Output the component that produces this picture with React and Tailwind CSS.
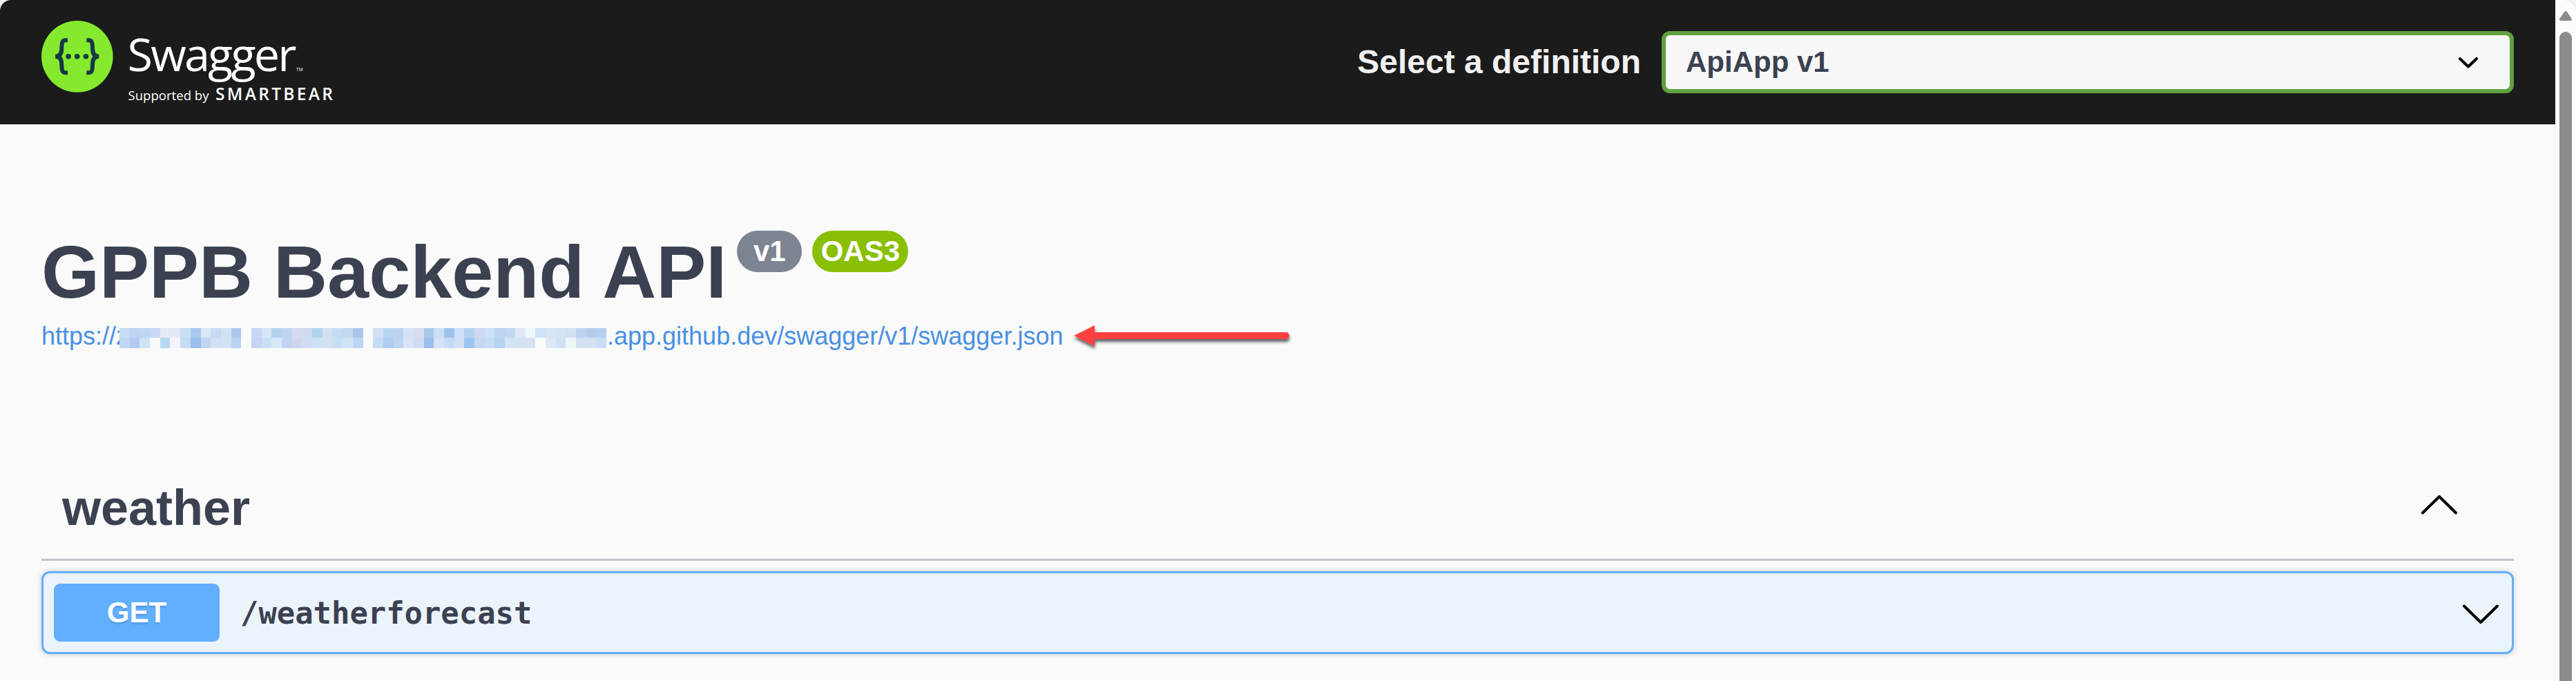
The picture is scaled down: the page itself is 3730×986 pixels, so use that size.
const HIDDEN_HOST = [
  ["#c6dcf3", "#c0d7f4"], ["#bfd3f2", "#b2caf0"], ["#bdd6f3", "#d0e2f4"], ["#c8d8f2", "#f8f9fb"],
  ["#e4ebf6", "#b7d7f3"], ["#e4e9f5", "#f2f4f9"], ["#cbdff5", "#c6dbf4"], ["#a8caee", "#99beeb"],
  ["#d9e7f7", "#bfd5f3"], ["#c8daf3", "#d5dff2"], ["#d2e2f5", "#d0e2f4"], ["#acc8ee", "#b9d5f2"],
  null,
  ["#c8d8f2", "#c6d4f1"], ["#d8e5f6", "#c8dff5"], ["#b2d4f0", "#d6eaf7"], ["#c0d5f3", "#c0d5f3"],
  ["#d5daf0", "#d1d4ed"], ["#d0daf0", "#d0dcf4"], ["#b0d5f1", "#cce3f7"], ["#d5dff2", "#d5dff2"],
  ["#c5ddf3", "#c6dff5"], ["#c3d8f1", "#d2e2f5"], ["#aac6ee", "#bbd7f3"],
  null,
  ["#d4def1", "#c5dcf4"], ["#b6d5f1", "#b0ccf1"], ["#bad4f0", "#bcd6f2"], ["#d6e2f4", "#d9e5f6"],
  ["#d8ddef", "#d0dcf3"], ["#aac9ee", "#98beed"], ["#cbdff5", "#d4e3f7"], ["#9fc2ed", "#c6dbf4"],
  ["#d0dff6", "#d2dff3"], ["#b5d2f0", "#9bc6f0"], ["#ced9f0", "#c7d6f1"], ["#cde1f7", "#c6dcf4"],
  ["#bed4f2", "#b6d4f1"], ["#c1d8f1", "#d2e3f5"], ["#e0e7f5", "#d3e3f5"], ["#eef7f9", "#d8e2f4"],
  ["#cfe5f6", "#fafafa"], ["#d8e4f4", "#dee7f6"], ["#d4e4f4", "#d0e2f5"], ["#d3e2f2", "#edf6f9"],
  ["#bed3f1", "#d2e1f3"], ["#b6cced", "#d2e2f4"], ["#b4d0f1", "#c8def6"],
];

function Logo() {
  return (
    <svg width="440" height="140" viewBox="50 20 440 140" className="-ml-2.5 block shrink-0">
      <circle cx="111.8" cy="81.8" r="51.8" fill="#85ea2d" />
      <g fill="none" stroke="#173647" strokeWidth="6">
        <path d="M98 58.2h-3.2c-4 0-5 2.600-5.200 6.300l-.5 8c-.3 5-2.500 9.200-9 9.200 6.500 0 8.700 4.200 9 9.200l.5 8c.2 3.700 1.200 6.300 5.200 6.300H98" />
        <path d="M125.300 58.200h3.200c4 0 5 2.600 5.200 6.300l.5 8c.3 5 2.500 9.200 9 9.200-6.500 0-8.700 4.200-9 9.200l-.5 8c-.2 3.700-1.200 6.300-5.200 6.300h-3.200" />
      </g>
      <g fill="#173647">
        <circle cx="99" cy="81.700" r="3.800" />
        <circle cx="111.700" cy="81.700" r="3.800" />
        <circle cx="124.400" cy="81.700" r="3.800" />
      </g>
      <g fill="#fff" fontFamily="'Open Sans', sans-serif">
        <text x="184.500" y="103" fontSize="66.500" textLength="245" lengthAdjust="spacing">Swagger</text>
        <text x="429" y="102.800" fontSize="6.500" textLength="9.500">TM</text>
        <text x="185.500" y="144.700" fontSize="18.500" textLength="117">Supported by</text>
        <text x="312" y="144.700" fontSize="24.500" fontWeight="600" textLength="170">SMARTBEAR</text>
      </g>
    </svg>
  );
}

function Chevron({ className, points, width, height, stroke }) {
  return (
    <svg width={width} height={height} className={className} fill="none" stroke="#000" strokeWidth={stroke} strokeLinecap="round" strokeLinejoin="round">
      <polyline points={points} />
    </svg>
  );
}

function Header() {
  return (
    <header className="flex h-[180px] items-start justify-between rounded-tl-[16px] bg-[#1b1b1b] px-[60px]">
      <div className="pt-5">
        <Logo />
      </div>
      <div className="flex h-full items-center">
        <span className="mr-[30px] text-[48px] leading-[54px] font-bold text-[#f0f0f0]">Select a definition</span>
        <div className="flex h-[90px] w-[1234px] items-center justify-between rounded-[12px] border-[6px] border-[#62a03f] bg-[#f7f7f7] pr-[46px] pl-[29px]">
          <span className="text-[42px] leading-[48px] font-bold text-[#3b4151]">ApiApp v1</span>
          <Chevron width="28" height="16" points="2,2 14,13.500 26,2" stroke="4" className="mt-[2px]" />
        </div>
      </div>
    </header>
  );
}

function RedactedHost() {
  return (
    <span className="absolute top-[15px] left-[113px] flex h-[29px] w-[705px] bg-[#fafafa]">
      {HIDDEN_HOST.map((pair, i) => (
        <span key={i} className="flex flex-1 flex-col">
          {pair && <span className="h-[14px]" style={{ backgroundColor: pair[0] }} />}
          {pair && <span className="h-[15px]" style={{ backgroundColor: pair[1] }} />}
        </span>
      ))}
    </span>
  );
}

function Info() {
  return (
    <section className="pt-[154px]">
      <div className="flex items-start">
        <h1 className="mt-[-2px] text-[108px] leading-[124px] font-bold whitespace-nowrap text-[#3b4151]">GPPB Backend API</h1>
        <span className="ml-[15px] flex h-[60px] w-[94px] items-center justify-center rounded-full bg-[#7d8492] text-[42px] leading-[48px] font-bold text-white">v1</span>
        <span className="ml-[15px] flex h-[60px] w-[139px] items-center justify-center rounded-full bg-[#89bf04] text-[42px] leading-[48px] font-bold text-white">OAS3</span>
      </div>
      <div className="relative mt-1 flex h-[54px] items-center text-[36px] leading-[54px] text-[#4990e2]">
        <a className="w-[819px] shrink-0">https://z</a>
        <RedactedHost />
        <a className="shrink-0 whitespace-nowrap">.app.github.dev/swagger/v1/swagger.json</a>
        <svg width="330" height="50" viewBox="1550 462 330 50" className="ml-[10px]">
          <defs>
            <filter id="lift" x="-10%" y="-50%" width="120%" height="220%">
              <feDropShadow dx="0.500" dy="4" stdDeviation="2.200" floodColor="#000" floodOpacity="0.6" />
            </filter>
          </defs>
          <path filter="url(#lift)" fill="#ff4141" d="M1556 486l30-15v10h277a5 5 0 0 1 0 10h-277v10z" />
        </svg>
      </div>
    </section>
  );
}

function Operations() {
  return (
    <section className="pt-[175px]">
      <div className="flex h-[123px] items-center justify-between border-b-[3px] border-[#c1c3c9] pr-[81px] pl-[30px]">
        <h2 className="mt-[-28px] text-[72px] leading-[84px] font-bold text-[#3b4151]">weather</h2>
        <Chevron width="54" height="28" points="3,25.500 27,2 51,25.500" stroke="4" className="mt-[-36px]" />
      </div>
      <div className="mt-[15px] flex h-[120px] items-center rounded-[12px] border-[3px] border-[#61affe] bg-[#ebf3fb] pr-[18px] pl-[9px] shadow-[0_0_9px_rgba(0,0,0,0.19)]">
        <span className="ml-[6px] flex h-[84px] w-[240px] items-center justify-center rounded-[9px] bg-[#61affe] text-[42px] leading-[48px] font-bold text-white [text-shadow:0_3px_0_rgba(0,0,0,0.1)]">GET</span>
        <span className="mt-[2px] ml-[30px] flex-1 font-['DejaVu_Sans_Mono',monospace] text-[43.85px] leading-[54px] font-bold text-[#3b4151]">/weatherforecast</span>
        <Chevron width="54" height="28" points="3,2.500 27,26 51,2.500" stroke="4" className="mt-[3px]" />
      </div>
    </section>
  );
}

function Scrollbar() {
  return (
    <aside className="flex w-[30px] shrink-0 flex-col items-center rounded-tr-[16px] bg-[#fcfcfc] pt-4 shadow-[0_0_2px_rgba(0,0,0,0.2)]">
      <svg width="18" height="14" viewBox="0 0 18 14">
        <path d="M7 1.200Q9-1 11 1.200L17.700 11Q18.500 14 16 14H2Q-.5 14 .3 11Z" fill="#8b8b8b" />
      </svg>
      <span className="mt-4 w-[18px] flex-1 rounded-t-full bg-[#8b8b8b]" />
    </aside>
  );
}

export default function App() {
  return (
    <div className="flex h-[986px] w-[3730px] overflow-hidden bg-[#f3f3f3] font-['Liberation_Sans',Arial,sans-serif]">
      <main className="w-[3700px] shrink-0 rounded-tl-[16px] bg-[#fafafa]">
        <Header />
        <div className="px-[60px]">
          <Info />
          <Operations />
        </div>
      </main>
      <Scrollbar />
    </div>
  );
}
